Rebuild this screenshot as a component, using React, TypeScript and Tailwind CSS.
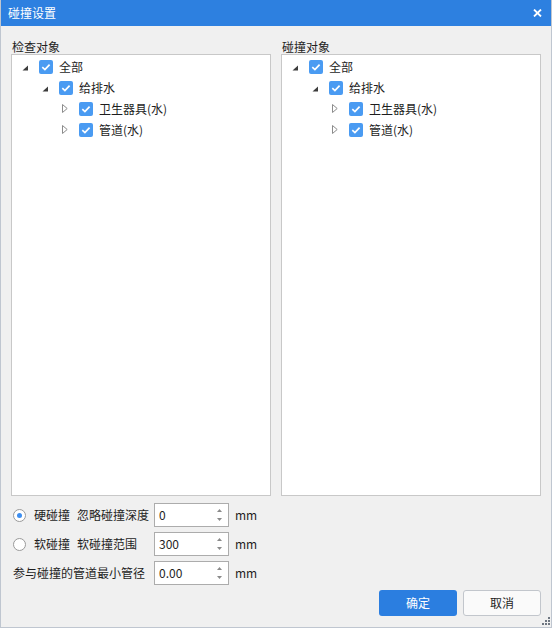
import React from 'react'

const FONT = "font-['Noto_Sans_CJK_SC','Noto_Sans',sans-serif]"

type Node = { label: string; level: number; expanded: boolean }

const tree: Node[] = [
  { label: '全部', level: 0, expanded: true },
  { label: '给排水', level: 1, expanded: true },
  { label: '卫生器具(水)', level: 2, expanded: false },
  { label: '管道(水)', level: 2, expanded: false },
]

function Checkbox() {
  return (
    <span className="w-[14px] h-[14px] rounded-[2px] bg-[#4a9bf2] flex items-center justify-center shrink-0">
      <svg width="14" height="14" viewBox="0 0 14 14">
        <path d="M3.3 7.2 L5.9 9.6 L10.6 4.6" fill="none" stroke="white" strokeWidth="1.7" />
      </svg>
    </span>
  )
}

function Toggle({ expanded }: { expanded: boolean }) {
  return expanded ? (
    <svg width="6" height="9" viewBox="0 0 6 9" className="shrink-0">
      <path d="M6 3.5 L6 8.5 L0.5 8.5 Z" fill="#3c3c3c" />
    </svg>
  ) : (
    <svg width="6" height="9" viewBox="0 0 6 9" className="shrink-0">
      <path d="M0.5 0.5 L5.2 4.5 L0.5 8.5 Z" fill="none" stroke="#8c8c8c" strokeWidth="1" />
    </svg>
  )
}

function TreePanel({ title }: { title: string }) {
  return (
    <div className="w-[260px] flex flex-col">
      <div className="h-[14px] leading-[14px] text-[12px] text-[#1e1e1e] pl-[1px]">{title}</div>
      <div className="h-[442px] border border-[#c8c8c8] bg-white pt-[1px]">
        {tree.map((n) => (
          <div key={n.label} className="h-[21px] flex items-center text-[12px] text-[#1e1e1e]">
            <span className="shrink-0" style={{ width: 10 + n.level * 20 }} />
            <Toggle expanded={n.expanded} />
            <span className="w-[11px] shrink-0" />
            <Checkbox />
            <span className="ml-[6px] leading-[14px]">{n.label}</span>
          </div>
        ))}
      </div>
    </div>
  )
}

function Spin({ value }: { value: string }) {
  return (
    <div className="w-[75px] h-[24px] border border-[#acacac] bg-white flex items-center pl-[4px] pr-[6px] text-[12px] text-[#1e1e1e]">
      <span className="flex-1">{value}</span>
      <div className="flex flex-col gap-[6px]">
        <svg width="5" height="3" viewBox="0 0 5 3">
          <path d="M0 3 L2.5 0 L5 3 Z" fill="#8a8a8a" />
        </svg>
        <svg width="5" height="3" viewBox="0 0 5 3">
          <path d="M0 0 L5 0 L2.5 3 Z" fill="#8a8a8a" />
        </svg>
      </div>
    </div>
  )
}

function Radio({ checked }: { checked: boolean }) {
  return (
    <span className="ml-[2px] w-[13px] h-[13px] rounded-full border border-[#9a9a9a] bg-white flex items-center justify-center shrink-0">
      {checked && <span className="w-[5px] h-[5px] rounded-full bg-[#3d8ef0]" />}
    </span>
  )
}

export default function App() {
  return (
    <div className={`relative w-[552px] h-[628px] bg-[#f0f0f0] flex flex-col border-x border-b border-[#bfc6d0] ${FONT}`}>
      {/* Title bar */}
      <div className="h-[26px] bg-[#2d80e0] flex items-center pl-[7px] pr-[9px] shrink-0">
        <span className="text-[12px] text-white leading-[14px]">碰撞设置</span>
        <svg width="9" height="8" viewBox="0 0 9 8" className="ml-auto">
          <path d="M1 0.5 L8 7.5 M8 0.5 L1 7.5" stroke="white" strokeWidth="1.8" />
        </svg>
      </div>

      <div className="flex flex-col px-[10px] pt-[14px]">
        <div className="flex gap-[10px]">
          <TreePanel title="检查对象" />
          <TreePanel title="碰撞对象" />
        </div>

        {/* Options */}
        <div className="mt-[7px] flex flex-col gap-[5px] text-[12px] text-[#1e1e1e]">
          <div className="h-[24px] flex items-center">
            <div className="w-[143px] flex items-center">
              <Radio checked />
              <span className="ml-[8px]">硬碰撞</span>
              <span className="ml-[7px]">忽略碰撞深度</span>
            </div>
            <Spin value="0" />
            <span className="ml-[6px]">mm</span>
          </div>
          <div className="h-[24px] flex items-center">
            <div className="w-[143px] flex items-center">
              <Radio checked={false} />
              <span className="ml-[8px]">软碰撞</span>
              <span className="ml-[7px]">软碰撞范围</span>
            </div>
            <Spin value="300" />
            <span className="ml-[6px]">mm</span>
          </div>
          <div className="h-[24px] flex items-center">
            <div className="w-[143px] flex items-center pl-[2px]">
              <span>参与碰撞的管道最小管径</span>
            </div>
            <Spin value="0.00" />
            <span className="ml-[6px]">mm</span>
          </div>
        </div>

        {/* Buttons */}
        <div className="mt-[5px] flex justify-end gap-[6px] text-[12px]">
          <button className="w-[78px] h-[26px] rounded-[3px] bg-[#2b7ee0] text-white">确定</button>
          <button className="w-[78px] h-[26px] rounded-[3px] bg-[#fafafa] border border-[#c2c6cc] text-[#1e1e1e]">取消</button>
        </div>
      </div>

      {/* Resize grip */}
      <svg width="8" height="8" viewBox="0 0 8 8" className="absolute right-[1px] bottom-[2px]">
        <rect x="6" y="0" width="2" height="2" fill="#6e7681" />
        <rect x="3" y="3" width="2" height="2" fill="#6e7681" />
        <rect x="6" y="3" width="2" height="2" fill="#6e7681" />
        <rect x="0" y="6" width="2" height="2" fill="#6e7681" />
        <rect x="3" y="6" width="2" height="2" fill="#6e7681" />
        <rect x="6" y="6" width="2" height="2" fill="#6e7681" />
      </svg>
    </div>
  )
}
